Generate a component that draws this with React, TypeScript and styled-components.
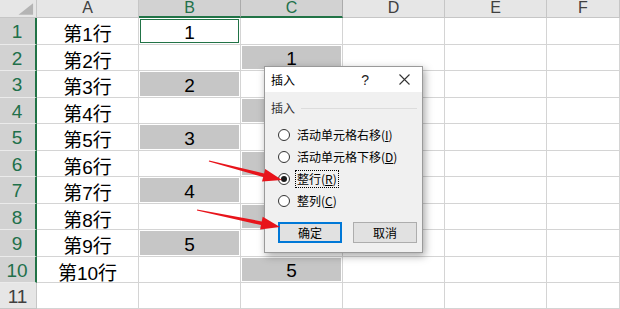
import React from "react";
import styled, { createGlobalStyle } from "styled-components";

const GlobalStyle = createGlobalStyle`
  body {
    margin: 0;
    overflow: hidden;
    background: #ffffff;
    font-family: "Liberation Sans", "Noto Sans CJK SC", sans-serif;
  }
`;

type Fill = "none" | "gray" | "active";

interface RowData {
  label: string;
  b?: string;
  bFill?: Fill;
  c?: string;
  cFill?: Fill;
}

// C4, C6, C8 값은 대화상자에 가려져 보이지 않음
const rows: RowData[] = [
  { label: "第1行", b: "1", bFill: "active" },
  { label: "第2行", c: "1", cFill: "gray" },
  { label: "第3行", b: "2", bFill: "gray" },
  { label: "第4行", cFill: "gray" },
  { label: "第5行", b: "3", bFill: "gray" },
  { label: "第6行", cFill: "gray" },
  { label: "第7行", b: "4", bFill: "gray" },
  { label: "第8行", cFill: "gray" },
  { label: "第9行", b: "5", bFill: "gray" },
  { label: "第10行", c: "5", cFill: "gray" },
];

const columns = ["A", "B", "C", "D", "E", "F"];
const activeColumns = ["B", "C"];

// 화살표 다각형 계산
const arrowPoints = (x1: number, y1: number, x2: number, y2: number) => {
  const dx = x2 - x1;
  const dy = y2 - y1;
  const len = Math.sqrt(dx * dx + dy * dy);
  const ux = dx / len;
  const uy = dy / len;
  const nx = -uy;
  const ny = ux;
  const head = 19;
  const half = 6.5;
  const bx = x2 - ux * head;
  const by = y2 - uy * head;
  const pts = [
    [x1 + nx * 0.6, y1 + ny * 0.6],
    [bx + nx * 1.8, by + ny * 1.8],
    [bx + nx * half, by + ny * half],
    [x2, y2],
    [bx - nx * half, by - ny * half],
    [bx - nx * 1.8, by - ny * 1.8],
    [x1 - nx * 0.6, y1 - ny * 0.6],
  ];
  return pts.map((p) => `${p[0].toFixed(1)},${p[1].toFixed(1)}`).join(" ");
};

export default function App() {
  return (
    <>
      <GlobalStyle />
      <Sheet>
        <Grid>
          <Corner>
            <svg width="37" height="18" viewBox="0 0 37 18">
              <polygon points="34,3 34,15 19,15" fill="#b4b4b4" />
            </svg>
          </Corner>
          {columns.map((col) => (
            <ColHeader key={col} $active={activeColumns.includes(col)}>
              {col}
            </ColHeader>
          ))}

          {rows.map((row, i) => (
            <React.Fragment key={row.label}>
              <RowHeader $active>{i + 1}</RowHeader>
              <Cell>{row.label}</Cell>
              <Cell>
                {row.bFill ? <CellFill $fill={row.bFill}>{row.b}</CellFill> : null}
              </Cell>
              <Cell>
                {row.cFill ? <CellFill $fill={row.cFill}>{row.c}</CellFill> : null}
              </Cell>
              <Cell />
              <Cell />
              <Cell />
            </React.Fragment>
          ))}

          <RowHeader $active={false}>11</RowHeader>
          <Cell />
          <Cell />
          <Cell />
          <Cell />
          <Cell />
          <Cell />
        </Grid>

        <Dialog>
          <TitleBar>
            <Title>插入</Title>
            <TitleButtons>
              <Help>?</Help>
              <svg width="11" height="11" viewBox="0 0 11 11">
                <path d="M0.5 0.5 L10.5 10.5 M10.5 0.5 L0.5 10.5" stroke="#333" strokeWidth="1.1" />
              </svg>
            </TitleButtons>
          </TitleBar>
          <Body>
            <GroupHeader>
              <GroupLabel>插入</GroupLabel>
            </GroupHeader>
            <Options>
              <Option>
                <Radio $checked={false} />
                <OptionLabel $focused={false}>
                  活动单元格右移(<u>I</u>)
                </OptionLabel>
              </Option>
              <Option>
                <Radio $checked={false} />
                <OptionLabel $focused={false}>
                  活动单元格下移(<u>D</u>)
                </OptionLabel>
              </Option>
              <Option>
                <Radio $checked />
                <OptionLabel $focused>
                  整行(<u>R</u>)
                </OptionLabel>
              </Option>
              <Option>
                <Radio $checked={false} />
                <OptionLabel $focused={false}>
                  整列(<u>C</u>)
                </OptionLabel>
              </Option>
            </Options>
            <Buttons>
              <Button $primary>确定</Button>
              <Button $primary={false}>取消</Button>
            </Buttons>
          </Body>
        </Dialog>

        <Arrows width="620" height="309" viewBox="0 0 620 309">
          <polygon points={arrowPoints(209, 161, 282, 180)} fill="#e8141b" />
          <polygon points={arrowPoints(197, 210, 280, 227)} fill="#e8141b" />
        </Arrows>
      </Sheet>
    </>
  );
}

const Sheet = styled.div`
  position: relative;
  width: 620px;
  height: 309px;
  overflow: hidden;
  background: #ffffff;
`;

const Grid = styled.div`
  display: grid;
  grid-template-columns: 37px repeat(5, 102px) 1fr;
  grid-template-rows: 18px repeat(10, 26.5px) 1fr;
  height: 309px;
`;

const Corner = styled.div`
  background: #e6e6e6;
  border-right: 1px solid #c6c6c6;
  border-bottom: 1px solid #c6c6c6;
  box-sizing: border-box;
  display: flex;

  svg {
    display: block;
  }
`;

const ColHeader = styled.div<{ $active: boolean }>`
  box-sizing: border-box;
  background: ${(p) => (p.$active ? "#d2d2d2" : "#e6e6e6")};
  color: ${(p) => (p.$active ? "#21704a" : "#404040")};
  border-right: 1px solid ${(p) => (p.$active ? "#ababab" : "#c6c6c6")};
  border-bottom: ${(p) => (p.$active ? "2px solid #217346" : "1px solid #c6c6c6")};
  font-size: 16px;
  line-height: 16px;
  text-align: center;
`;

const RowHeader = styled.div<{ $active: boolean }>`
  box-sizing: border-box;
  background: ${(p) => (p.$active ? "#d2d2d2" : "#e6e6e6")};
  color: ${(p) => (p.$active ? "#21704a" : "#404040")};
  border-right: ${(p) => (p.$active ? "2px solid #217346" : "1px solid #c6c6c6")};
  border-bottom: 1px solid ${(p) => (p.$active ? "#ebebeb" : "#c6c6c6")};
  font-size: 19px;
  display: flex;
  align-items: center;
  justify-content: center;
  padding-top: 3px;
  padding-right: 1px;
`;

const Cell = styled.div`
  box-sizing: border-box;
  border-right: 1px solid #d4d4d4;
  border-bottom: 1px solid #d4d4d4;
  font-size: 19px;
  color: #000;
  display: flex;
  align-items: center;
  justify-content: center;
  padding-top: 4px;
  min-width: 0;
  position: relative;
`;

const CellFill = styled.div<{ $fill: Fill }>`
  position: absolute;
  inset: 1px;
  box-sizing: border-box;
  background: ${(p) => (p.$fill === "gray" ? "#c6c6c6" : "#ffffff")};
  border: ${(p) => (p.$fill === "active" ? "1px solid #217346" : "none")};
  display: flex;
  align-items: center;
  justify-content: center;
  padding-top: 4px;
`;

const Dialog = styled.div`
  position: absolute;
  left: 264px;
  top: 66px;
  width: 159px;
  height: 187px;
  box-sizing: border-box;
  border: 1px solid #9a9a9a;
  background: #f0f0f0;
  box-shadow: 2px 3px 8px rgba(0, 0, 0, 0.35);
  display: flex;
  flex-direction: column;
  font-family: "Noto Sans CJK SC", sans-serif;
  font-size: 12px;
  color: #000;
`;

const TitleBar = styled.div`
  height: 25px;
  background: #ffffff;
  display: flex;
  align-items: center;
  justify-content: space-between;
  padding: 0 12px 0 6px;
`;

const Title = styled.span`
  font-size: 12px;
  color: #000;
`;

const TitleButtons = styled.div`
  display: flex;
  align-items: center;
  gap: 30px;
`;

const Help = styled.span`
  font-family: "Liberation Sans", sans-serif;
  font-size: 14px;
  color: #222;
`;

const Body = styled.div`
  flex: 1;
  display: flex;
  flex-direction: column;
  padding: 8px 5px 9px 6px;
`;

// 그룹 제목 + 구분선
const GroupHeader = styled.div`
  display: flex;
  align-items: center;
  height: 16px;
  color: #333;

  &::after {
    content: "";
    flex: 1;
    height: 1px;
    margin-left: 6px;
    background: #dcdcdc;
  }
`;

const GroupLabel = styled.span`
  line-height: 16px;
`;

const Options = styled.div`
  display: flex;
  flex-direction: column;
  margin-top: 8px;
  padding-left: 7px;
`;

const Option = styled.div`
  display: flex;
  align-items: center;
  height: 22px;
  gap: 5px;
`;

const Radio = styled.span<{ $checked: boolean }>`
  width: 12px;
  height: 12px;
  box-sizing: border-box;
  border: 1px solid #333;
  border-radius: 50%;
  background: #fff;
  display: flex;
  align-items: center;
  justify-content: center;

  &::after {
    content: "";
    display: ${(p) => (p.$checked ? "block" : "none")};
    width: 6px;
    height: 6px;
    border-radius: 50%;
    background: #1a1a1a;
  }
`;

const OptionLabel = styled.span<{ $focused: boolean }>`
  border: 1px dotted ${(p) => (p.$focused ? "#000" : "transparent")};
  padding: 0 1px;
  line-height: 16px;
  white-space: nowrap;

  u {
    text-underline-offset: 1px;
  }
`;

const Buttons = styled.div`
  display: flex;
  justify-content: flex-end;
  gap: 11px;
  margin-top: 10px;
`;

const Button = styled.div<{ $primary: boolean }>`
  width: 64px;
  height: 21px;
  box-sizing: border-box;
  background: #e1e1e1;
  border: ${(p) => (p.$primary ? "2px solid #0078d7" : "1px solid #adadad")};
  display: flex;
  align-items: center;
  justify-content: center;
  font-size: 12px;
`;

const Arrows = styled.svg`
  position: absolute;
  left: 0;
  top: 0;
  pointer-events: none;
`;
